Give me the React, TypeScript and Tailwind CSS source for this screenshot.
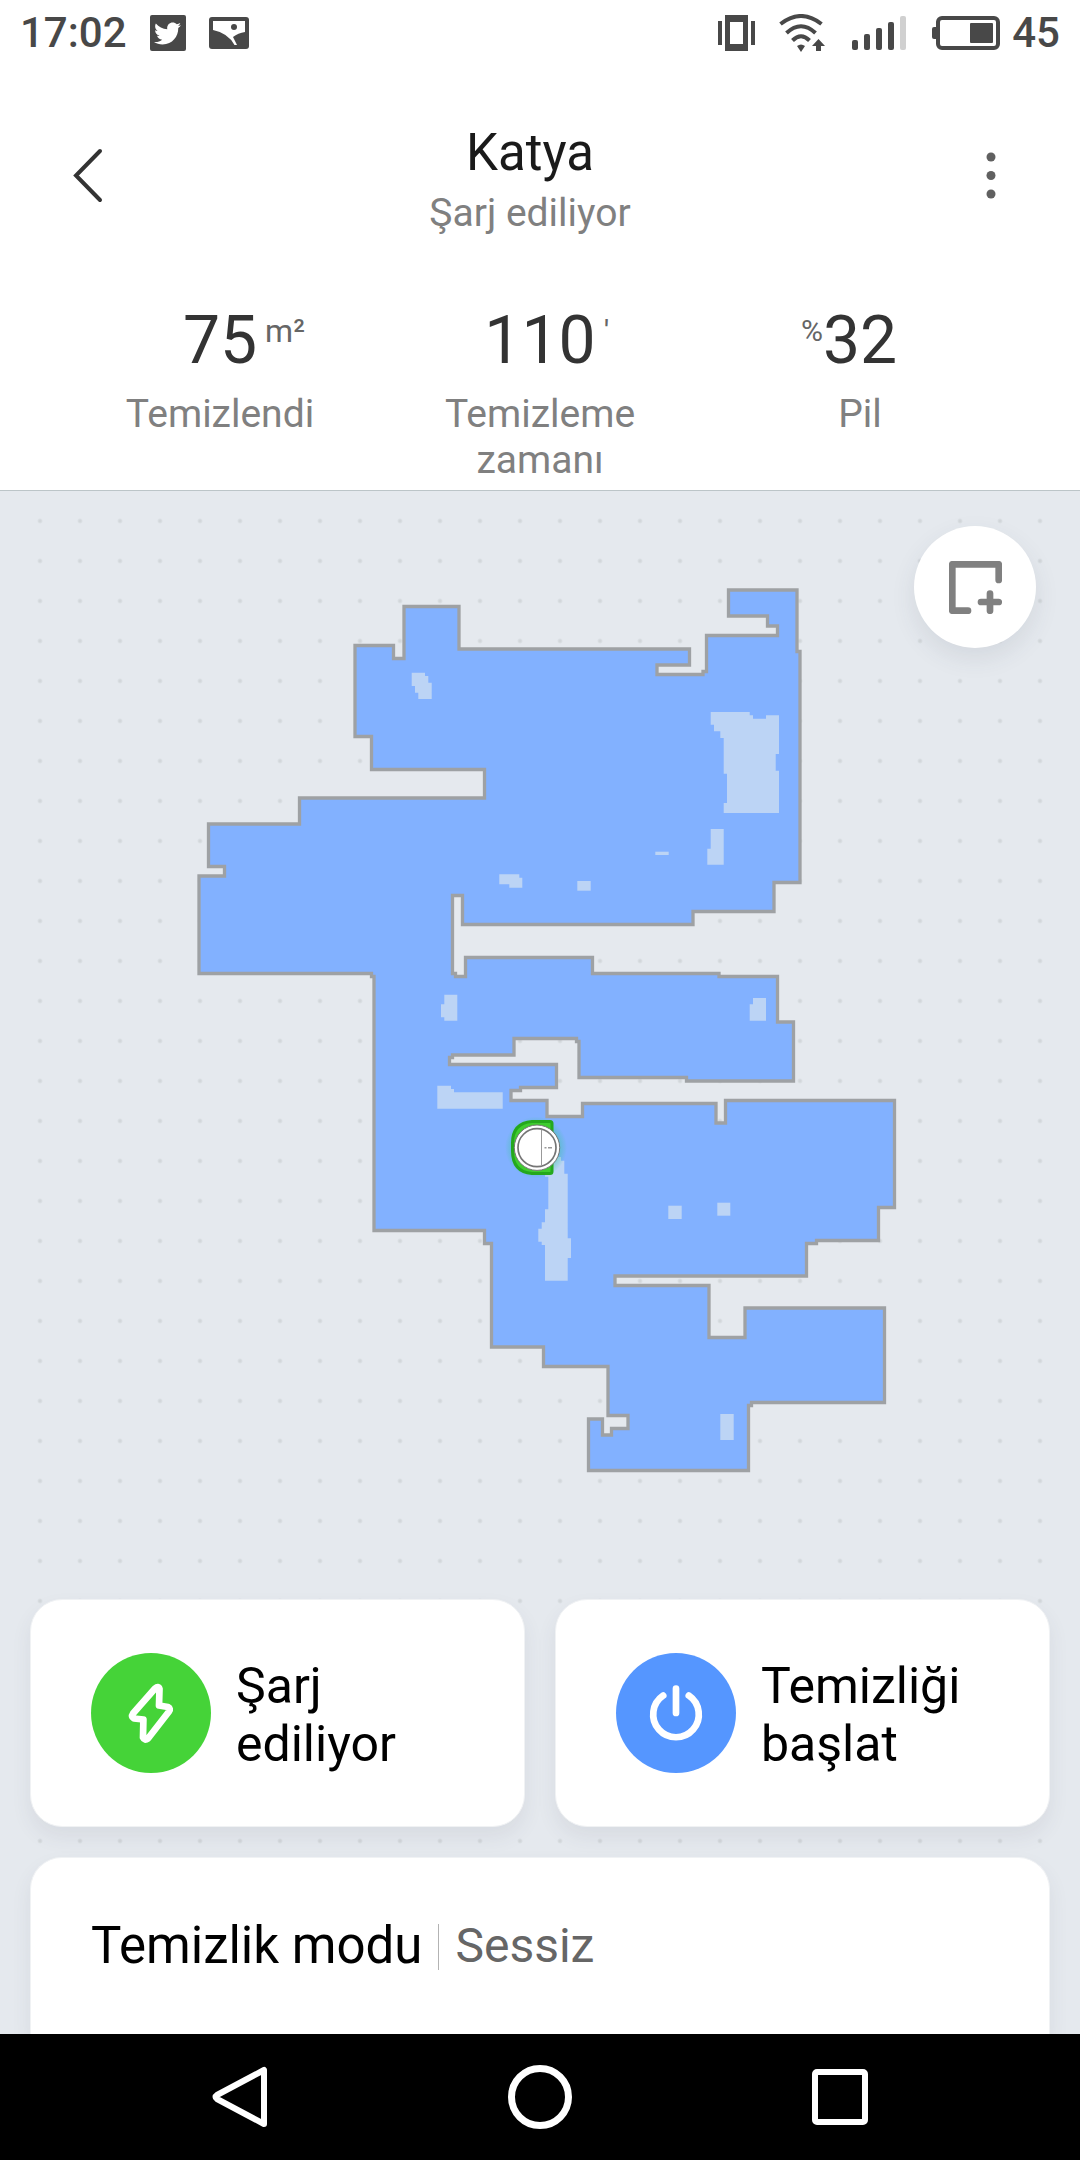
import React from 'react';
import { FaTwitter } from 'react-icons/fa';

interface StatProps {
    value: string;
    label: string;
    prefix?: string;
    suffix?: string;
}

interface ActionCardProps {
    label: string;
    iconClass: string;
    children: React.ReactNode;
}

// outline of the cleaned area
const floorPath =
    'M404 606.5H459V649H689.5V665H657V674.5H703V671.5H706.5V635.5H777.5V626H767.5V616H728.5V590H797V651.5H800' +
    'V882.5H774V911.5H693V924.5H462.5V895.5H452.5V973.5H455.5V976.5H465.5V957.5H592.5V973.5H719V976.5H777.5' +
    'V1022H793.5V1081H686.5V1077.5H579V1041.5H576.5V1038.5H514V1055H452.5V1057.5H449.5V1064.5H556.5V1087.5' +
    'H520.5V1090.5H511V1100.5H547V1116.5H582.5V1103.5H716V1123H725.5V1100.5H894.5V1207.5H878.5V1240.5H816.5' +
    'V1243.5H806.5V1276H615V1285.5H709V1337.5H745V1308H884.5V1402.5H751.5V1405.5H748.5V1470.5H588.5V1419' +
    'H602.5V1435H611.5V1428.5H628V1415.5H608V1366.5H543.5V1347H491.5V1243.5H484.5V1230.5H374V976.5H371.5' +
    'V973.5H199V876H224.5V866.5H208.5V824H299.5V798H484.5V769.5H371.5V736.5H355V645.5H393.5V658.5H404Z';

const carpetPaths = [
    'M411.7 672.7H425V676H428.3V682.7H431.7V699H418.3V692.7H415V686H411.7Z',
    'M710.7 712H749.7V715.3H753V718.7H766V715.3H779V754H775.7V770.7H779V813H723.7V803H727V773.7H723.7V738H720.3V731.3H714V724.7H710.7Z',
    'M710.7 829H723.7V864.7H707.3V848.7H710.7Z',
    'M655.3 851.7H668.7V855H655.3Z',
    'M499.3 874.3H519.3V877.7H522.3V887.7H509.3V884.3H499.3Z',
    'M577.3 881H590.7V890.7H577.3Z',
    'M444.3 994.7H457.3V1020.7H444.3V1017.3H441V1004.3H444.3Z',
    'M753 998H766V1020.7H749.7V1004.3H753Z',
    'M437.3 1085.7H451V1089H454V1092.3H502.7V1108.7H437.3Z',
    'M668.3 1205.7H681.7V1219H668.3Z',
    'M717.3 1202.7H730.3V1215.7H717.3Z',
    'M720.3 1414H733.7V1440H720.3Z',
    'M553 1157H561V1160.7H564.3V1173.7H567.7V1238.3H571V1258H567.7V1280.7H545V1245H541.7V1241.7H538.3V1228.7H541.7V1222.3H545V1209.3H548.3V1176.7H545V1165H553Z',
];

const StatusBar = () => (
    <div className="flex h-[66px] items-center justify-between px-5 text-[42px] leading-[50px] font-medium text-[#484848]">
        <div className="flex items-center gap-[23px]">
            <span>17:02</span>
            <span className="flex size-9 items-center justify-center rounded-[2px] bg-[#484848]">
                <FaTwitter className="size-[27px] text-white" />
            </span>
            <svg className="h-8 w-10" viewBox="0 0 40 32">
                <rect width="40" height="32" rx="3" fill="#484848" />
                <path d="M4 4H36V15Q29 16 24 20L28 28H25.500Q19 16 4 13Z" fill="#fff" />
                <circle cx="25" cy="10" r="3" fill="#484848" />
            </svg>
        </div>
        <div className="flex items-center">
            <svg className="h-9 w-[37px]" viewBox="0 0 37 36" fill="#484848">
                <path d="M0 6H4V30H0ZM33 6H37V30H33Z" />
                <path fillRule="evenodd" d="M7 0H30V36H7ZM12 7V29H25V7Z" />
            </svg>
            <svg className="ml-6 h-[38px] w-[46px]" viewBox="0 0 46 38" fill="none" stroke="#484848" strokeWidth="4">
                <path d="M1.500 10Q22 -6 42.500 10M7.500 19Q22 5.500 36.500 19M13.500 26.500Q22 18 30.500 26.500" />
                <path d="M18 32Q22 29 26 32L22 38Z" fill="#484848" stroke="none" />
                <path d="M39.500 25L46 32H42V37H37V32H33Z" fill="#484848" stroke="none" />
            </svg>
            <svg className="ml-[27px] h-[34px] w-[54px]" viewBox="0 0 54 34" fill="#484848">
                <rect y="24" width="6" height="10" rx="2" />
                <rect x="12" y="18" width="6" height="16" rx="2" />
                <rect x="24" y="12" width="6" height="22" rx="2" />
                <rect x="36" y="6" width="6" height="28" rx="2" />
                <rect x="48" width="6" height="34" rx="2" fill="#d0d0d0" />
            </svg>
            <svg className="ml-[26px] h-[34px] w-[68px]" viewBox="0 0 68 34">
                <rect y="11" width="6" height="12" rx="2" fill="#484848" />
                <rect x="6" y="2" width="60" height="30" rx="4" fill="none" stroke="#484848" strokeWidth="4" />
                <rect x="38" y="7" width="23" height="20" rx="1" fill="#484848" />
            </svg>
            <span className="ml-3">45</span>
        </div>
    </div>
);

const Stat: React.FC<StatProps> = ({ value, label, prefix, suffix }) => (
    <div className="flex flex-1 flex-col items-center">
        <div className="flex w-full pl-2 text-[66px] leading-[80px] text-[#333]">
            <span className="flex-1 pt-3 text-right text-[30px] leading-9 text-[#666]">{prefix}</span>
            <span>{value}</span>
            <span className="flex-1 pt-3 pl-2 text-[32px] leading-9 text-[#666]">{suffix}</span>
        </div>
        <div className="mt-2.5 max-w-[210px] text-center text-[39px] leading-[46px] text-[#808080]">{label}</div>
    </div>
);

const FloorMap = () => (
    <svg className="relative block w-full" viewBox="0 491 1080 1108" role="img" aria-label="Harita">
        <defs>
            <radialGradient id="dockGlow">
                <stop offset="0.6" stopColor="#3ac6a0" stopOpacity="0.7" />
                <stop offset="1" stopColor="#3ac6a0" stopOpacity="0" />
            </radialGradient>
        </defs>
        <path d={floorPath} fill="#82b1ff" stroke="#9ea1a4" strokeWidth="3.300" />
        {carpetPaths.map((d) => (
            <path key={d} d={d} fill="#bcd4f5" />
        ))}
        <circle cx="536" cy="1147.500" r="31" fill="url(#dockGlow)" />
        <path
            d="M537 1121.500H550Q552 1121.500 552 1123.500V1171.500Q552 1173.500 550 1173.500H532Q512.500 1172 512.500 1151V1143Q512.500 1123 532 1121.500Z"
            fill="#3fcc2f"
            stroke="#25a81c"
            strokeWidth="3"
        />
        <circle cx="537" cy="1147.700" r="22.700" fill="#fff" stroke="#757575" strokeWidth="1" />
        <circle cx="537" cy="1147.700" r="19" fill="#fff" stroke="#757575" strokeWidth="1.700" />
        <path d="M541.500 1129.500V1166" stroke="#999" strokeWidth="1" />
        <path d="M544.500 1147.700H546.500M548 1147.700H552" stroke="#999" strokeWidth="1.500" />
    </svg>
);

const ActionCard: React.FC<ActionCardProps> = ({ label, iconClass, children }) => (
    <button className="flex items-center rounded-[32px] border border-[#f0f2f4] bg-white px-[60px] py-[53px] text-left text-[50px] leading-[58px] text-black shadow-[0_10px_20px_rgba(60,70,90,0.08)]">
        <span className={`size-[120px] shrink-0 rounded-full ${iconClass}`}>
            <svg
                viewBox="0 0 120 120"
                fill="none"
                stroke="#fff"
                strokeWidth="6.700"
                strokeLinecap="round"
                strokeLinejoin="round"
            >
                {children}
            </svg>
        </span>
        {/* pt must stay within the 120px icon height */}
        <span className="ml-[25px] max-w-[220px] pt-1">{label}</span>
    </button>
);

const App = () => {
    return (
        <div className="flex min-h-screen flex-col bg-white font-['Roboto',sans-serif]">
            <StatusBar />
            <header className="flex h-[220px] items-center pr-[54px] pl-[72px]">
                <button aria-label="Geri" className="w-8">
                    <svg className="h-14 w-8" viewBox="0 0 32 56" fill="none" stroke="#333" strokeWidth="4" strokeLinecap="round">
                        <path d="M28 3L4 27.500L28 52" />
                    </svg>
                </button>
                <div className="flex-1 pt-2 text-center">
                    <h1 className="text-[51px] leading-[60px] text-[#1a1a1a]">Katya</h1>
                    <p className="mt-1.5 text-[39px] leading-[48px] text-[#808080]">Şarj ediliyor</p>
                </div>
                <button aria-label="Menü" className="flex w-[70px] justify-center">
                    <svg className="h-12 w-3" viewBox="0 0 12 48" fill="#606060">
                        <circle cx="6" cy="5" r="4.500" />
                        <circle cx="6" cy="23.500" r="4.500" />
                        <circle cx="6" cy="42" r="4.500" />
                    </svg>
                </button>
            </header>
            <section className="flex border-b border-[#bcc5c8] px-[60px] pt-[15px] pb-[7px]">
                <Stat value="75" suffix="m²" label="Temizlendi" />
                <Stat value="110" suffix="'" label="Temizleme zamanı" />
                <Stat value="32" prefix="%" label="Pil" />
            </section>

            <main className="relative flex flex-1 flex-col bg-[#e5e9ee]">
                <div className="absolute inset-x-5 top-2.5 bottom-0 bg-[radial-gradient(circle,#d3d7db_1px,transparent_3px)] bg-[length:40px_40px]" />
                <FloorMap />
                <button
                    aria-label="Alan ekle"
                    className="absolute top-[35px] right-11 flex size-[122px] items-center justify-center rounded-full bg-white shadow-[0_10px_24px_rgba(60,70,90,0.1)]"
                >
                    <svg
                        className="size-[53px]"
                        viewBox="0 0 53 53"
                        fill="none"
                        stroke="#808080"
                        strokeWidth="6.700"
                        strokeLinecap="round"
                        strokeLinejoin="round"
                    >
                        <path d="M49.700 19V3.300H3.300V49.700H19M32 41H49.700M41 32.500V49.700" />
                    </svg>
                </button>
                <div className="relative grid grid-cols-2 gap-[30px] px-[30px]">
                    <ActionCard label="Şarj ediliyor" iconClass="bg-[#45d338]">
                        <path d="M64 35.500Q67.500 32.500 68.500 36L68 52.500L77 54Q80 55.500 78 58.500L57 85.500Q53.500 88 52 84.500L52.400 66.500L43 65.500Q40 63.500 42 60.500Z" />
                    </ActionCard>
                    <ActionCard label="Temizliği başlat" iconClass="bg-[#5596ff]">
                        <path d="M60 35.500V60M47.200 42.600A22.800 22.800 0 1 0 72.800 42.600" />
                    </ActionCard>
                </div>
                <button className="relative mx-[30px] mt-[30px] flex flex-1 items-start rounded-t-[32px] border-x border-t border-[#f0f2f4] bg-white px-[60px] pt-[58px] text-left shadow-[0_10px_20px_rgba(60,70,90,0.08)]">
                    <span className="text-[51px] leading-[60px] text-black">Temizlik modu</span>
                    <span className="mt-2 ml-4 h-[46px] w-px bg-[#b3b3b3]" />
                    <span className="ml-4 text-[48px] leading-[60px] text-[#666]">Sessiz</span>
                </button>
            </main>

            <nav className="relative flex h-[126px] items-center bg-black px-[90px]">
                <button aria-label="Geri git" className="flex flex-1 justify-center">
                    <svg className="size-16" viewBox="0 0 64 64" fill="none" stroke="#fff" strokeWidth="6" strokeLinejoin="round">
                        <path d="M56 5V59L9 34Q6 32 9 30Z" />
                    </svg>
                </button>
                <button aria-label="Ana ekran" className="flex flex-1 justify-center">
                    <svg className="size-16" viewBox="0 0 64 64" fill="none" stroke="#fff" strokeWidth="7">
                        <circle cx="32" cy="32" r="28.500" />
                    </svg>
                </button>
                <button aria-label="Son uygulamalar" className="flex flex-1 justify-center">
                    <svg className="size-16" viewBox="0 0 64 64" fill="none" stroke="#fff" strokeWidth="6">
                        <rect x="7" y="7" width="50" height="50" rx="2" />
                    </svg>
                </button>
            </nav>
        </div>
    );
};

export default App;
